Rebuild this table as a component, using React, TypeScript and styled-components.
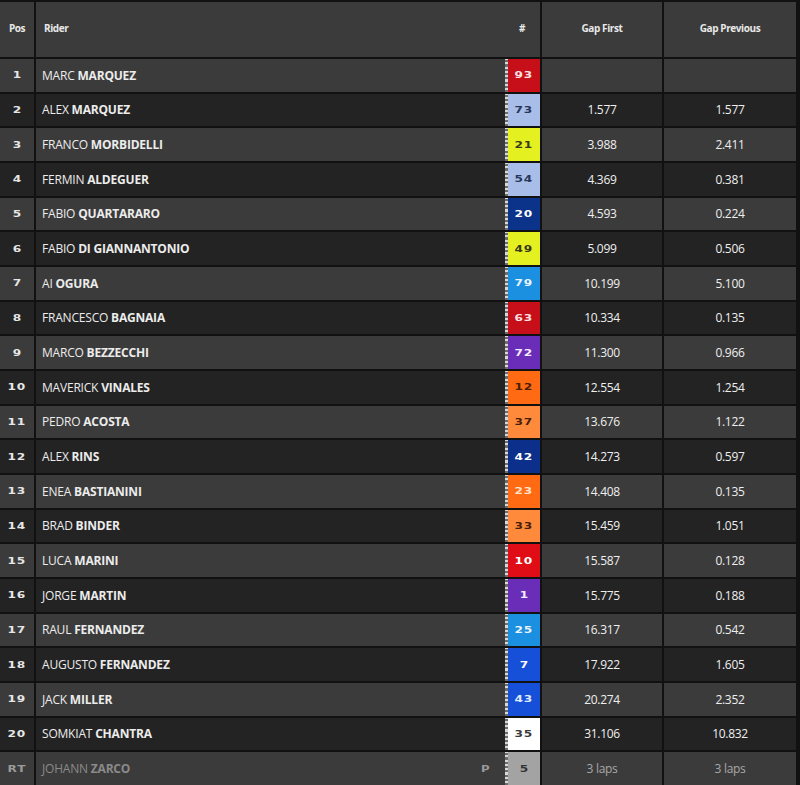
import React from "react";
import styled, { createGlobalStyle } from "styled-components";

type Result = {
  pos: string;
  first: string;
  last: string;
  num: string;
  bg: string;
  fg: string;
  gapFirst: string;
  gapPrev: string;
  retired?: boolean;
};

const results: Result[] = [
  { pos: "1", first: "MARC", last: "MARQUEZ", num: "93", bg: "#c70f19", fg: "#fbe3e3", gapFirst: "", gapPrev: "" },
  { pos: "2", first: "ALEX", last: "MARQUEZ", num: "73", bg: "#a8bde8", fg: "#27375a", gapFirst: "1.577", gapPrev: "1.577" },
  { pos: "3", first: "FRANCO", last: "MORBIDELLI", num: "21", bg: "#e4f01f", fg: "#3a3a1a", gapFirst: "3.988", gapPrev: "2.411" },
  { pos: "4", first: "FERMIN", last: "ALDEGUER", num: "54", bg: "#a8bde8", fg: "#27375a", gapFirst: "4.369", gapPrev: "0.381" },
  { pos: "5", first: "FABIO", last: "QUARTARARO", num: "20", bg: "#0b338a", fg: "#ffffff", gapFirst: "4.593", gapPrev: "0.224" },
  { pos: "6", first: "FABIO", last: "DI GIANNANTONIO", num: "49", bg: "#e4f01f", fg: "#3a3a1a", gapFirst: "5.099", gapPrev: "0.506" },
  { pos: "7", first: "AI", last: "OGURA", num: "79", bg: "#1b8fe0", fg: "#e8f4ff", gapFirst: "10.199", gapPrev: "5.100" },
  { pos: "8", first: "FRANCESCO", last: "BAGNAIA", num: "63", bg: "#c70f19", fg: "#fbe3e3", gapFirst: "10.334", gapPrev: "0.135" },
  { pos: "9", first: "MARCO", last: "BEZZECCHI", num: "72", bg: "#6a2db8", fg: "#f3ecff", gapFirst: "11.300", gapPrev: "0.966" },
  { pos: "10", first: "MAVERICK", last: "VINALES", num: "12", bg: "#ff6a12", fg: "#4a1e08", gapFirst: "12.554", gapPrev: "1.254" },
  { pos: "11", first: "PEDRO", last: "ACOSTA", num: "37", bg: "#ff8a3c", fg: "#4a1e08", gapFirst: "13.676", gapPrev: "1.122" },
  { pos: "12", first: "ALEX", last: "RINS", num: "42", bg: "#0b2f8a", fg: "#ffffff", gapFirst: "14.273", gapPrev: "0.597" },
  { pos: "13", first: "ENEA", last: "BASTIANINI", num: "23", bg: "#ff6a12", fg: "#ffe2cc", gapFirst: "14.408", gapPrev: "0.135" },
  { pos: "14", first: "BRAD", last: "BINDER", num: "33", bg: "#ff8a3c", fg: "#4a1e08", gapFirst: "15.459", gapPrev: "1.051" },
  { pos: "15", first: "LUCA", last: "MARINI", num: "10", bg: "#e00d16", fg: "#ffffff", gapFirst: "15.587", gapPrev: "0.128" },
  { pos: "16", first: "JORGE", last: "MARTIN", num: "1", bg: "#6a2db8", fg: "#f3ecff", gapFirst: "15.775", gapPrev: "0.188" },
  { pos: "17", first: "RAUL", last: "FERNANDEZ", num: "25", bg: "#1b8fe0", fg: "#e8f4ff", gapFirst: "16.317", gapPrev: "0.542" },
  { pos: "18", first: "AUGUSTO", last: "FERNANDEZ", num: "7", bg: "#1650d8", fg: "#ffffff", gapFirst: "17.922", gapPrev: "1.605" },
  { pos: "19", first: "JACK", last: "MILLER", num: "43", bg: "#1650d8", fg: "#dfe9ff", gapFirst: "20.274", gapPrev: "2.352" },
  { pos: "20", first: "SOMKIAT", last: "CHANTRA", num: "35", bg: "#ffffff", fg: "#3a3a3a", gapFirst: "31.106", gapPrev: "10.832" },
  { pos: "RT", first: "JOHANN", last: "ZARCO", num: "5", bg: "#a3a3a3", fg: "#333333", gapFirst: "3 laps", gapPrev: "3 laps", retired: true },
];

const GlobalStyle = createGlobalStyle`
  body {
    margin: 0;
    background: #111111;
    font-family: "Open Sans", "Noto Sans", sans-serif;
  }
`;

function App() {
  return (
    <>
      <GlobalStyle />
      <Table>
        <Row>
          <HeadCell $align="center">Pos</HeadCell>
          <HeadCell $align="left">
            <span>Rider</span>
            <Hash>#</Hash>
          </HeadCell>
          <HeadCell $align="center">Gap First</HeadCell>
          <HeadCell $align="center">Gap Previous</HeadCell>
        </Row>
        {results.map((r, i) => (
          <Row key={r.pos}>
            <Cell $dark={i % 2 === 1} $align="center">
              <SquareNum $color={r.retired ? "#9a9a9a" : "#e6e6e6"}>{r.pos}</SquareNum>
            </Cell>
            <RiderCell $dark={i % 2 === 1}>
              <Name $retired={r.retired}>
                <span>
                  {r.first} <b>{r.last}</b>
                </span>
              </Name>
              {r.retired && <Pit>P</Pit>}
              <Badge $bg={r.bg}>
                <SquareNum $color={r.fg}>{r.num}</SquareNum>
              </Badge>
            </RiderCell>
            <Cell $dark={i % 2 === 1} $align="center">
              <Gap $retired={r.retired}>{r.gapFirst}</Gap>
            </Cell>
            <Cell $dark={i % 2 === 1} $align="center">
              <Gap $retired={r.retired}>{r.gapPrev}</Gap>
            </Cell>
          </Row>
        ))}
      </Table>
    </>
  );
}

const Table = styled.div`
  width: 800px;
  height: 785px;
  box-sizing: border-box;
  padding-top: 2px;
  display: grid;
  grid-template-rows: 55px repeat(21, 1fr);
  row-gap: 2px;
  background: #111111;
`;

const Row = styled.div`
  display: grid;
  grid-template-columns: 34px 504px 120px 132px;
  column-gap: 2px;
`;

const HeadCell = styled.div<{ $align: string }>`
  background: #3b3b3b;
  display: flex;
  align-items: center;
  justify-content: ${(p) => (p.$align === "center" ? "center" : "space-between")};
  padding: ${(p) => (p.$align === "center" ? "0" : "0 0 0 8px")};
  padding-bottom: 3px;
  color: #e8e8e8;
  font-size: 10px;
  font-weight: 700;
  letter-spacing: -0.4px;
`;

const Hash = styled.span`
  width: 36px;
  text-align: center;
  font-size: 10px;
`;

const Cell = styled.div<{ $dark: boolean; $align: string }>`
  background: ${(p) => (p.$dark ? "#232323" : "#3b3b3b")};
  display: flex;
  align-items: center;
  justify-content: ${(p) => p.$align};
`;

const RiderCell = styled.div<{ $dark: boolean }>`
  background: ${(p) => (p.$dark ? "#232323" : "#3b3b3b")};
  display: flex;
  align-items: stretch;
  padding-left: 6px;
`;

const Name = styled.div<{ $retired?: boolean }>`
  flex: 1;
  display: flex;
  align-items: center;
  color: ${(p) => (p.$retired ? "#8a8a8a" : "#ececec")};
  font-size: 12px;
  font-weight: 500;
  letter-spacing: -0.2px;

  b {
    font-weight: 700;
  }
`;

const Pit = styled.div`
  display: flex;
  align-items: center;
  padding-right: 14px;
  color: #9a9a9a;
  font-family: "DejaVu Sans", sans-serif;
  font-weight: 700;
  font-size: 9px;
  transform: scaleX(1.3);
`;

const Badge = styled.div<{ $bg: string }>`
  width: 32px;
  display: flex;
  align-items: center;
  justify-content: center;
  background: ${(p) => p.$bg};
  border-style: solid;
  border-width: 0 0 0 3px;
  border-image: repeating-linear-gradient(to bottom, #d8d8d8 0 2px, #6c6c6c 2px 4px) 1;
`;

const SquareNum = styled.span<{ $color: string }>`
  display: inline-block;
  color: ${(p) => p.$color};
  font-family: "DejaVu Sans", sans-serif;
  font-weight: 700;
  font-size: 9px;
  letter-spacing: 0.6px;
  transform: scaleX(1.35);
`;

const Gap = styled.span<{ $retired?: boolean }>`
  color: ${(p) => (p.$retired ? "#a8a8a8" : "#efefef")};
  font-size: 12px;
  font-weight: ${(p) => (p.$retired ? 400 : 500)};
  letter-spacing: -0.3px;
`;

export default App;
